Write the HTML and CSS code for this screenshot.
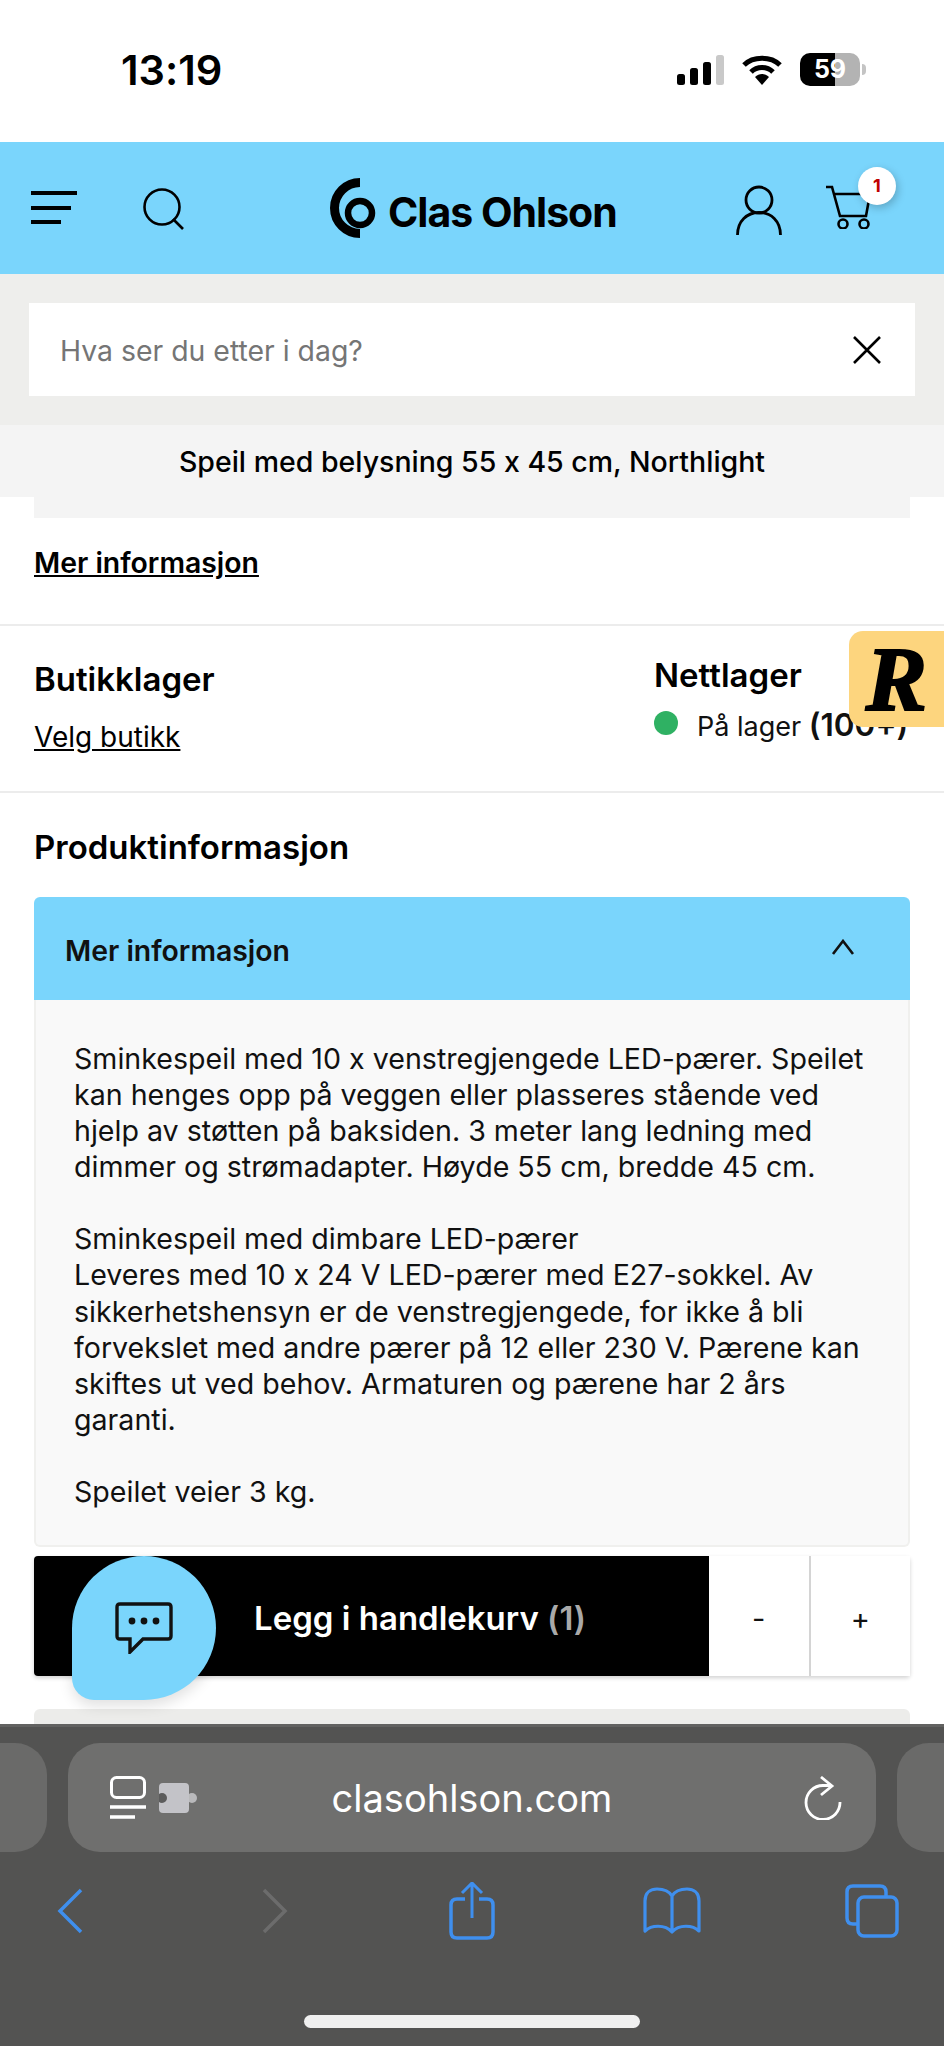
FILE: index.html
```html
<!DOCTYPE html>
<html lang="no">
<head>
<meta charset="UTF-8">
<meta name="viewport" content="width=device-width, initial-scale=1.0">
<title>Speil med belysning 55 x 45 cm, Northlight</title>
<link rel="stylesheet" href="styles.css">
</head>
<body>

<div class="status-bar">
    <span class="clock">13:19</span>
    <div class="status-icons">
        <svg class="signal" width="47" height="30" viewBox="0 0 47 30">
            <rect x="0" y="19" width="8" height="11" rx="2.5" fill="#000"/>
            <rect x="13" y="13" width="8" height="17" rx="2.5" fill="#000"/>
            <rect x="26" y="7" width="8" height="23" rx="2.5" fill="#000"/>
            <rect x="39" y="0" width="8" height="30" rx="2.5" fill="#c9c9c9"/>
        </svg>
        <svg class="wifi" width="40" height="30" viewBox="0 0 40 30">
            <path d="M2 10 C11 1 29 1 38 10" fill="none" stroke="#000" stroke-width="5"/>
            <path d="M9 17 C15 11 25 11 31 17" fill="none" stroke="#000" stroke-width="5"/>
            <path d="M13 22 C17 18 23 18 27 22 L20 30 Z" fill="#000"/>
        </svg>
        <div class="battery">
            <div class="battery-body">59</div>
            <div class="battery-nub"></div>
        </div>
    </div>
</div>

<header class="site-header">
    <svg class="menu-icon" width="46" height="34" viewBox="0 0 46 34">
        <path d="M0 2H46M0 17H40M0 31H30" stroke="#000" stroke-width="4" fill="none"/>
    </svg>
    <svg class="search-icon" width="42" height="42" viewBox="0 0 42 42">
        <circle cx="19" cy="19" r="17.5" fill="none" stroke="#000" stroke-width="2.6"/>
        <path d="M30 31L40 41" stroke="#000" stroke-width="2.6" fill="none"/>
    </svg>
    <div class="logo">
        <svg width="46" height="60" viewBox="0 0 46 60">
            <path d="M30 4.5A25.5 25.5 0 0 0 30 55.5" fill="none" stroke="#000" stroke-width="9"/>
            <circle cx="30" cy="35" r="12" fill="none" stroke="#000" stroke-width="6.5"/>
        </svg>
        <span class="logo-text">Clas Ohlson</span>
    </div>
    <svg class="user-icon" width="46" height="50" viewBox="0 0 46 50">
        <circle cx="23" cy="15" r="13" fill="none" stroke="#000" stroke-width="2.8"/>
        <path d="M1.5 50C1.5 36 11 27.5 23 27.5S44.500 36 44.500 50" fill="none" stroke="#000" stroke-width="2.8"/>
    </svg>
    <div class="cart">
        <svg width="46" height="44" viewBox="0 0 46 44">
            <path d="M0 2H6L14 31H40L44 9H8" fill="none" stroke="#000" stroke-width="2.6"/>
            <circle cx="17" cy="39" r="4.500" fill="none" stroke="#000" stroke-width="2.6"/>
            <circle cx="38" cy="39" r="4.500" fill="none" stroke="#000" stroke-width="2.6"/>
        </svg>
        <span class="cart-badge">1</span>
    </div>
</header>

<div class="search-area">
    <div class="search-box">
        <span class="search-placeholder">Hva ser du etter i dag?</span>
        <svg width="28" height="28" viewBox="0 0 28 28">
            <path d="M1 1L27 27M27 1L1 27" stroke="#000" stroke-width="2.6" fill="none"/>
        </svg>
    </div>
</div>

<div class="product-title">Speil med belysning 55 x 45 cm, Northlight</div>

<main class="content">
    <section class="more-link-section">
        <div class="grey-strip"></div>
        <a class="more-link">Mer informasjon</a>
    </section>

    <section class="stock">
        <div class="stock-store">
            <h3>Butikklager</h3>
            <a class="store-link">Velg butikk</a>
        </div>
        <div class="stock-online">
            <h3>Nettlager</h3>
            <div class="stock-line">
                <span class="stock-dot"></span>
                <span>På lager <b>(100+)</b></span>
            </div>
        </div>
    </section>

    <section class="product-info">
        <h2>Produktinformasjon</h2>
        <div class="accordion-head">
            <span class="accordion-title">Mer informasjon</span>
            <svg width="24" height="16" viewBox="0 0 24 16">
                <path d="M2 15L12 2L22 15" fill="none" stroke="#111" stroke-width="2.6"/>
            </svg>
        </div>
        <div class="accordion-body">
            <p>Sminkespeil med 10 x venstregjengede LED-pærer. Speilet<br>
            kan henges opp på veggen eller plasseres stående ved<br>
            hjelp av støtten på baksiden. 3 meter lang ledning med<br>
            dimmer og strømadapter. Høyde 55 cm, bredde 45 cm.</p>
            <p>Sminkespeil med dimbare LED-pærer<br>
            Leveres med 10 x 24 V LED-pærer med E27-sokkel. Av<br>
            sikkerhetshensyn er de venstregjengede, for ikke å bli<br>
            forvekslet med andre pærer på 12 eller 230 V. Pærene kan<br>
            skiftes ut ved behov. Armaturen og pærene har 2 års<br>
            garanti.</p>
            <p>Speilet veier 3 kg.</p>
        </div>
        <div class="buy-row">
            <div class="buy-button">Legg i handlekurv <span class="buy-count">(1)</span></div>
            <div class="qty-button">-</div>
            <div class="qty-button">+</div>
        </div>
        <div class="next-accordion"></div>
    </section>
</main>

<footer class="browser-bar">
    <div class="url-row">
        <div class="side-pill side-pill-left"></div>
        <div class="url-pill">
            <div class="url-icons">
                <svg width="36" height="44" viewBox="0 0 36 44">
                    <rect x="1.500" y="1.500" width="33" height="20" rx="5" fill="none" stroke="#fff" stroke-width="3"/>
                    <path d="M0 31H36M0 41H25" stroke="#fff" stroke-width="3.500" fill="none"/>
                </svg>
                <svg width="38" height="30" viewBox="0 0 38 30">
                    <circle cx="33" cy="15" r="5" fill="#b9b9bb"/>
                    <rect x="0" y="0" width="30" height="30" rx="4" fill="#c3c3c8"/>
                    <circle cx="3" cy="15" r="5" fill="#5c5c5c"/>
                </svg>
            </div>
            <span class="url-text">clasohlson.com</span>
            <svg class="reload" width="38" height="44" viewBox="0 0 38 44">
                <path d="M27 9.500H19A17 17 0 1 0 36 26" fill="none" stroke="#fff" stroke-width="2.800"/>
                <path d="M17 1L28 10L17 19" fill="none" stroke="#fff" stroke-width="2.800"/>
            </svg>
        </div>
        <div class="side-pill side-pill-right"></div>
    </div>
    <nav class="browser-nav">
        <svg width="26" height="46" viewBox="0 0 26 46">
            <path d="M24 2L3 23L24 44" fill="none" stroke="#3f8fee" stroke-width="3.500"/>
        </svg>
        <svg class="nav-forward" width="26" height="46" viewBox="0 0 26 46">
            <path d="M2 2L23 23L2 44" fill="none" stroke="#6c6c6c" stroke-width="3.500"/>
        </svg>
        <svg class="nav-share" width="46" height="58" viewBox="0 0 46 58">
            <path d="M16 17H8Q2 17 2 23V50Q2 56 8 56H38Q44 56 44 50V23Q44 17 38 17H30" fill="none" stroke="#3f8fee" stroke-width="3.500"/>
            <path d="M23 2V36M13 11L23 1L33 11" fill="none" stroke="#3f8fee" stroke-width="3"/>
        </svg>
        <svg class="nav-book" width="58" height="48" viewBox="0 0 58 48">
            <path d="M2 44V14C2 5 8 2 14 2C21 2 26 4 29 9C32 4 37 2 44 2C50 2 56 5 56 14V44C50 38 36 37 29 45C22 37 8 38 2 44ZM29 9V44" fill="none" stroke="#3f8fee" stroke-width="3.200" stroke-linejoin="round"/>
        </svg>
        <svg class="nav-tabs" width="54" height="54" viewBox="0 0 54 54">
            <path d="M41 12V8Q41 2 35 2H8Q2 2 2 8V34Q2 40 8 40H12" fill="none" stroke="#3f8fee" stroke-width="3.500"/>
            <rect x="13" y="13" width="39" height="39" rx="6" fill="none" stroke="#3f8fee" stroke-width="3.500"/>
        </svg>
    </nav>
    <div class="home-indicator"></div>
</footer>

<div class="review-badge">R</div>

<div class="chat-bubble">
    <svg width="58" height="52" viewBox="0 0 58 52">
        <path d="M5 2H53Q56 2 56 5V34Q56 37 53 37H28L15 50V37H5Q2 37 2 34V5Q2 2 5 2Z" fill="none" stroke="#111" stroke-width="3.400"/>
        <circle cx="17" cy="19" r="3.400" fill="#111"/>
        <circle cx="29" cy="19" r="3.400" fill="#111"/>
        <circle cx="41" cy="19" r="3.400" fill="#111"/>
    </svg>
</div>

</body>
</html>
```

FILE: styles.css
```css
* {
    box-sizing: border-box;
}
body {
    margin: 0;
    width: 944px;
    height: 2046px;
    overflow: hidden;
    position: relative;
    display: flex;
    flex-direction: column;
    background-color: #ffffff;
    color: #111111;
    font-family: Inter, "Liberation Sans", sans-serif;
    font-feature-settings: "calt" 0;
    font-size: 28.4px;
}
h2, h3, p {
    margin: 0;
}

/* phone status bar */
.status-bar {
    height: 142px;
    flex: none;
    display: flex;
    justify-content: space-between;
    padding: 47px 78px 0 121px;
}
.clock {
    font-size: 41.5px;
    font-weight: 600;
    line-height: 46px;
    color: #000000;
}
.status-icons {
    display: flex;
    gap: 18px;
    height: 33px;
    margin-top: 6px;
    align-items: flex-start;
}
.signal, .wifi {
    margin-top: 2px;
}
.battery {
    display: flex;
    align-items: center;
    gap: 2px;
}
.battery-body {
    width: 60px;
    height: 33px;
    border-radius: 10px;
    background: linear-gradient(to right, #000000 58%, #b3b3b3 58%);
    color: #ffffff;
    font-size: 25px;
    font-weight: 700;
    line-height: 33px;
    text-align: center;
}
.battery-nub {
    width: 4px;
    height: 11px;
    border-radius: 0 4px 4px 0;
    background-color: #c4c4c4;
}

/* site header */
.site-header {
    height: 132px;
    flex: none;
    display: flex;
    align-items: center;
    padding-left: 31px;
    background-color: #7ad5fc;
}
.search-icon {
    margin-left: 66px;
    margin-top: 2px;
}
.logo {
    display: flex;
    align-items: center;
    margin-left: 145px;
    width: 300px;
}
.logo svg {
    flex: none;
}
.logo-text {
    margin-left: 12px;
    font-size: 41px;
    font-weight: 700;
    letter-spacing: -1px;
    white-space: nowrap;
    color: #000000;
    margin-top: 8px;
}
.user-icon {
    margin-left: 106px;
    margin-top: 4px;
    flex: none;
}
.cart {
    position: relative;
    margin-left: 44px;
    margin-top: -2px;
    flex: none;
    height: 44px;
}
.cart-badge {
    position: absolute;
    left: 32px;
    top: -18px;
    width: 38px;
    height: 38px;
    border-radius: 50%;
    background-color: #ffffff;
    box-shadow: 2px 3px 8px rgba(0,0,0,0.22);
    color: #c00000;
    font-size: 18px;
    font-weight: 700;
    line-height: 38px;
    text-align: center;
}

/* search */
.search-area {
    height: 151px;
    flex: none;
    padding: 29px 29px 0;
    background-color: #eeeeec;
}
.search-box {
    height: 93px;
    display: flex;
    align-items: center;
    justify-content: space-between;
    padding: 0 34px 0 31px;
    background-color: #ffffff;
}
.search-placeholder {
    color: #757575;
    padding-top: 1px;
}

.product-title {
    height: 72px;
    flex: none;
    background-color: #f4f4f4;
    font-size: 28.5px;
    font-weight: 500;
    line-height: 73px;
    text-align: center;
    color: #000000;
}

/* main content */
.content {
    flex: 1;
    min-height: 0;
    overflow: hidden;
}
.more-link-section {
    height: 129px;
    padding: 0 34px;
    border-bottom: 2px solid #ececec;
}
.grey-strip {
    height: 21px;
    background-color: #f4f4f4;
}
.more-link {
    display: block;
    margin-top: 28px;
    font-weight: 600;
    line-height: 34px;
    text-decoration: underline;
    color: #000000;
}
.stock {
    height: 167px;
    display: flex;
    padding: 0 34px;
    border-bottom: 2px solid #ececec;
}
.stock-store {
    width: 620px;
    padding-top: 34px;
}
.stock h3 {
    font-size: 33px;
    font-weight: 600;
    line-height: 38px;
    color: #000000;
}
.store-link {
    display: block;
    margin-top: 22px;
    font-size: 28px;
    line-height: 34px;
    text-decoration: underline;
    color: #000000;
}
.stock-online {
    padding-top: 30px;
}
.stock-line {
    display: flex;
    align-items: center;
    gap: 19px;
    margin-top: 13px;
    font-size: 27px;
    line-height: 36px;
    white-space: nowrap;
}
.stock-dot {
    width: 24px;
    height: 24px;
    border-radius: 50%;
    background-color: #2fb163;
    margin-top: -6px;
}
.stock-line b {
    font-size: 31.5px;
    font-weight: 600;
}
.product-info {
    padding: 36px 34px 0;
}
.product-info h2 {
    font-size: 33px;
    font-weight: 600;
    line-height: 36px;
    color: #000000;
}
.accordion-head {
    height: 103px;
    margin-top: 32px;
    display: flex;
    align-items: center;
    justify-content: space-between;
    padding: 0 55px 0 31px;
    border-radius: 6px 6px 0 0;
    background-color: #7ad5fc;
    font-weight: 600;
}
.accordion-title {
    padding-top: 3px;
}
.accordion-head svg {
    margin-top: -4px;
}
.accordion-body {
    height: 547px;
    padding: 41px 20px 0 38px;
    border: 2px solid #f0f0ee;
    border-top: none;
    border-radius: 0 0 6px 6px;
    background-color: #f9f9f9;
    font-size: 28.6px;
    line-height: 36.1px;
    white-space: nowrap;
}
.accordion-body p {
    margin-bottom: 36px;
}
.buy-row {
    height: 120px;
    margin-top: 9px;
    display: flex;
    border-radius: 4px;
    box-shadow: 0 2px 4px rgba(0,0,0,0.18);
}
.buy-button {
    width: 675px;
    padding-left: 220px;
    border-radius: 4px 0 0 4px;
    background-color: #000000;
    color: #ffffff;
    font-size: 33px;
    font-weight: 600;
    line-height: 124px;
}
.buy-count {
    color: #a9a9a9;
}
.qty-button {
    flex: 1;
    font-size: 29px;
    line-height: 126px;
    text-align: center;
    background-color: #ffffff;
}
.qty-button + .qty-button {
    border-left: 2px solid #d4d4d4;
}
.next-accordion {
    height: 30px;
    margin-top: 33px;
    border-radius: 6px 6px 0 0;
    background-color: #ececea;
}

/* safari toolbar */
.browser-bar {
    height: 322px;
    flex: none;
    background-color: #535352;
    border-top: 3px solid #626261;
}
.url-row {
    display: flex;
    justify-content: space-between;
    margin-top: 16px;
    height: 109px;
}
.side-pill {
    width: 47px;
    background-color: #6a6a69;
}
.side-pill-left {
    border-radius: 0 32px 32px 0;
}
.side-pill-right {
    border-radius: 32px 0 0 32px;
}
.url-pill {
    width: 808px;
    display: grid;
    grid-template-columns: 1fr auto 1fr;
    align-items: center;
    padding: 0 34px 0 42px;
    border-radius: 32px;
    background-color: #6f6f6e;
}
.url-icons {
    display: flex;
    align-items: center;
    gap: 13px;
}
.url-text {
    color: #ffffff;
    font-size: 38px;
    padding-right: 8px;
}
.reload {
    justify-self: end;
}
.browser-nav {
    display: flex;
    align-items: center;
    height: 58px;
    margin-top: 30px;
    padding-left: 57px;
}
.nav-forward {
    margin-left: 179px;
}
.nav-share {
    margin-left: 161px;
}
.nav-book {
    margin-left: 148px;
}
.nav-tabs {
    margin-left: 144px;
}
.home-indicator {
    width: 336px;
    height: 13px;
    margin: 75px auto 0;
    border-radius: 7px;
    background-color: #f0f0f0;
}

/* things floating on top of the page */
.review-badge {
    position: absolute;
    left: 849px;
    top: 631px;
    width: 95px;
    height: 96px;
    border-radius: 14px 0 0 14px;
    background-color: #fdd57e;
    color: #000000;
    font-family: "Liberation Serif", serif;
    font-size: 92px;
    font-style: italic;
    font-weight: 700;
    line-height: 96px;
    text-align: center;
    -webkit-text-stroke: 2px #000000;
}
.chat-bubble {
    position: absolute;
    left: 72px;
    top: 1556px;
    width: 144px;
    height: 144px;
    display: flex;
    align-items: center;
    justify-content: center;
    border-radius: 72px 72px 72px 22px;
    background-color: #7ad5fc;
    box-shadow: 0 6px 14px rgba(0,0,0,0.12);
}
```
